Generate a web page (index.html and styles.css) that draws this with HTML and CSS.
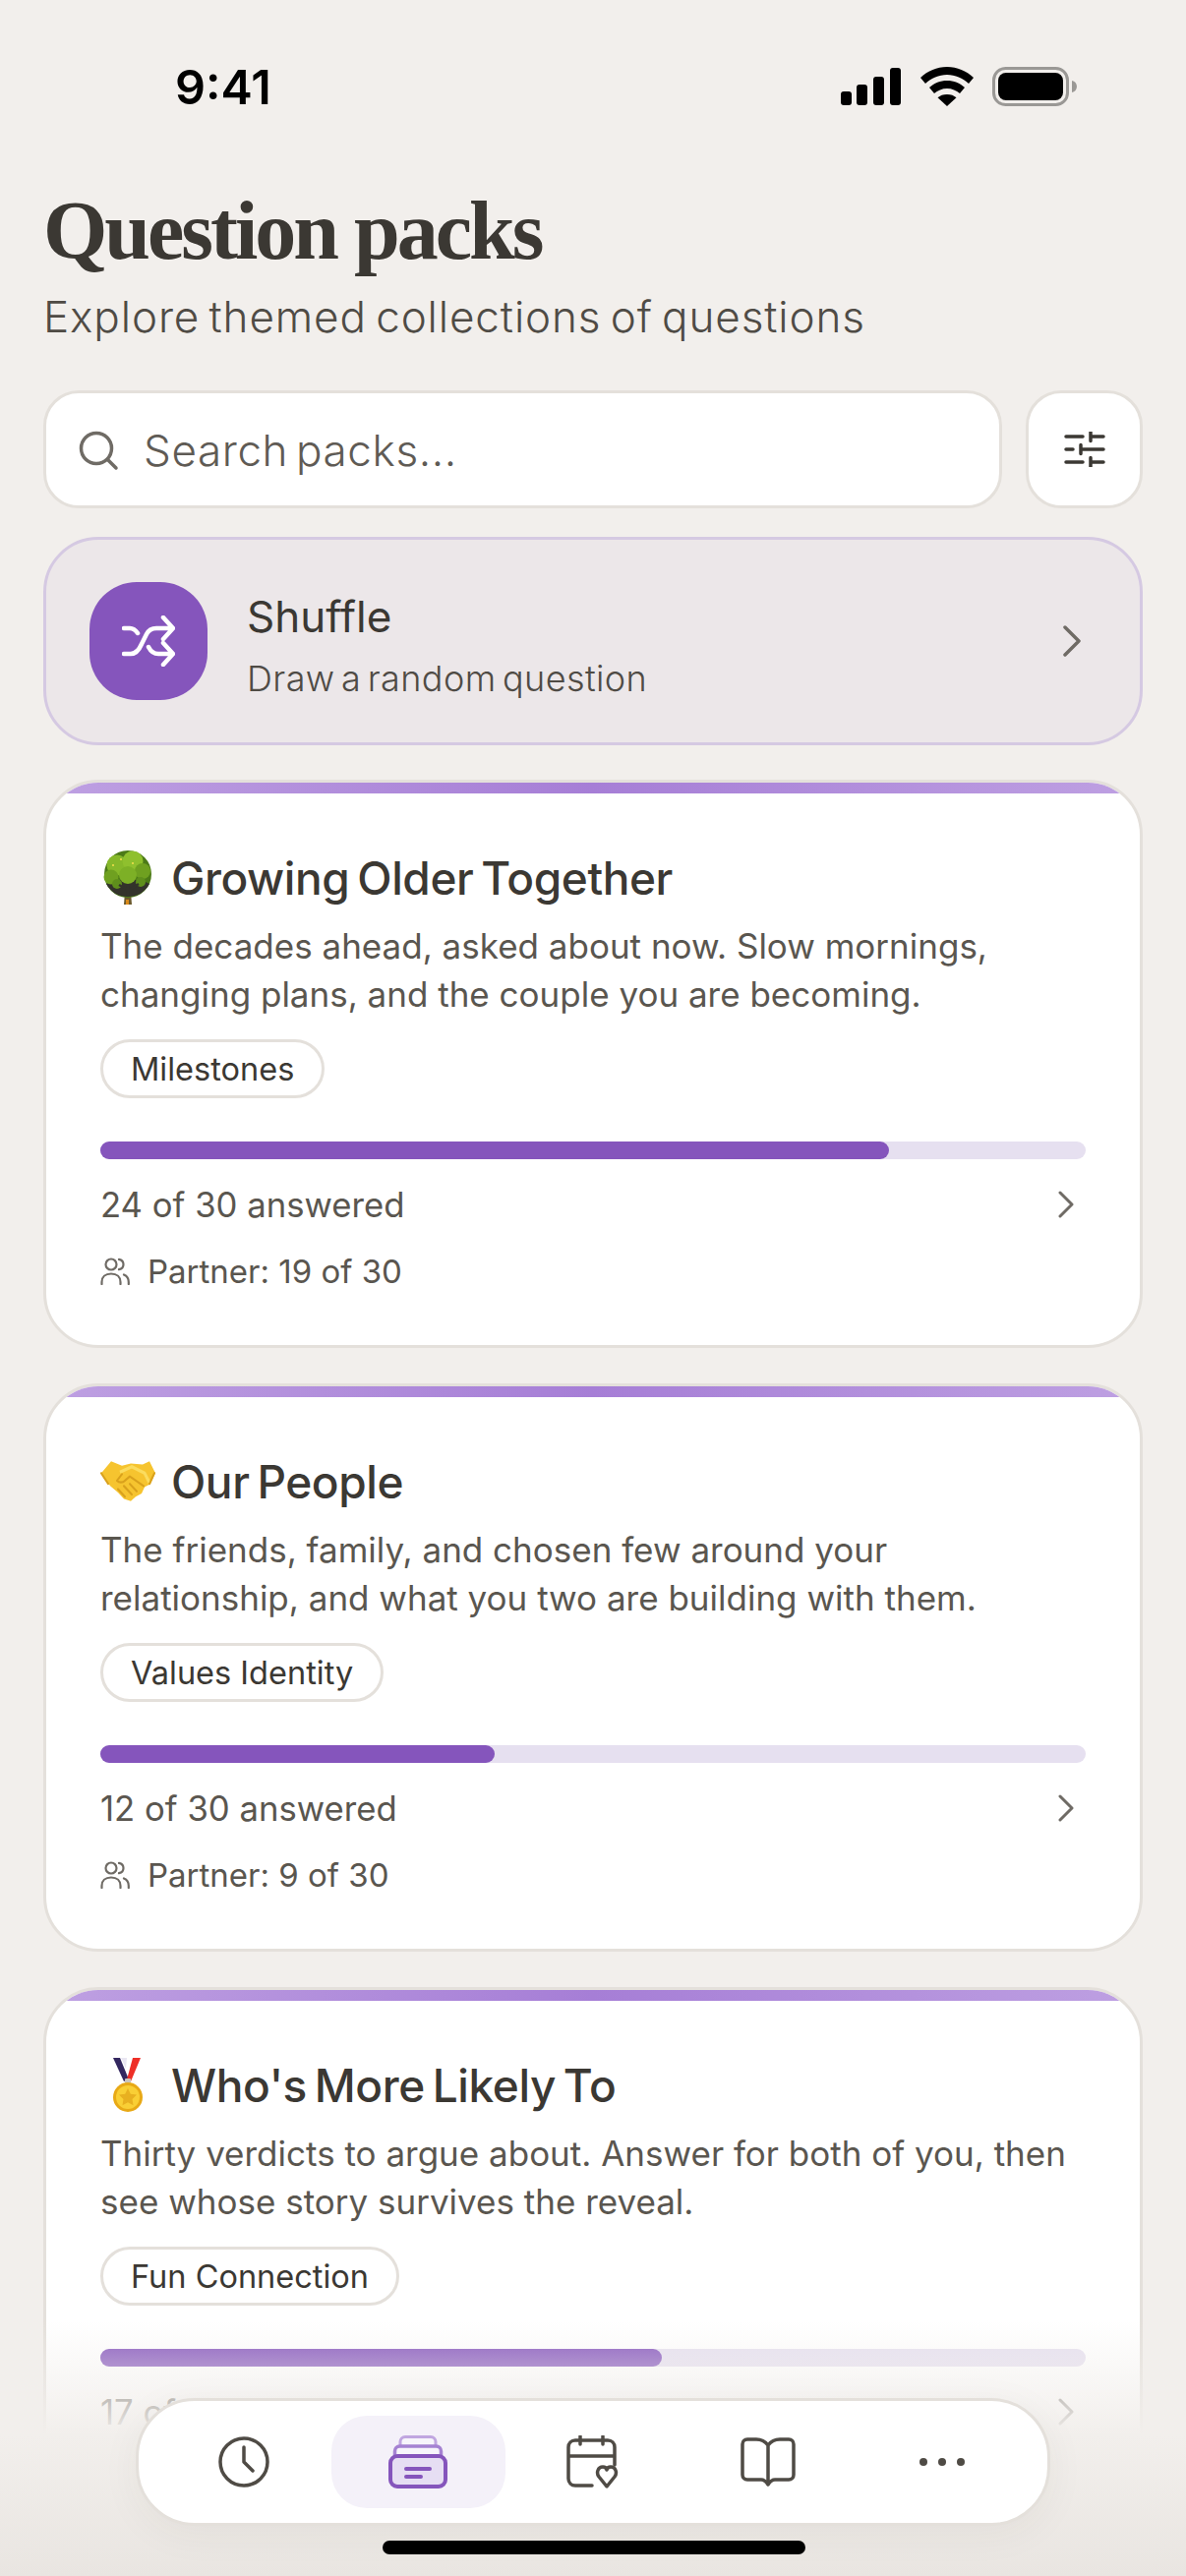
FILE: index.html
```html
<!DOCTYPE html>
<html>
<head>
    <title>Question packs</title>
    <link rel="stylesheet" href="styles.css">
</head>
<body>
<div class="phone">
    <div class="status-bar">
        <div class="time">9:41</div>
        <div class="status-icons">
            <svg width="62" height="38" viewBox="0 0 62 38"><rect x="0" y="24" width="11" height="14" rx="3"/><rect x="16" y="17" width="11" height="21" rx="3"/><rect x="33" y="9" width="11" height="29" rx="3"/><rect x="50" y="0" width="11" height="38" rx="3"/></svg>
            <svg width="54" height="40" viewBox="0 0 54 40"><path d="M27 0C16.500 0 7.500 4 0 11l5 6C11 11.500 18.500 8 27 8s16 3.500 22 9l5-6C46.500 4 37.500 0 27 0z"/><path d="M27 14c-7 0-13 2.500-18 7l5 6c3.500-3 8-5 13-5s9.500 2 13 5l5-6c-5-4.500-11-7-18-7z"/><path d="M27 28c-4 0-7 1.200-9.500 3.300L27 40l9.500-8.700C34 29.200 31 28 27 28z"/></svg>
            <svg width="86" height="40" viewBox="0 0 86 40"><rect x="1.500" y="1.500" width="75" height="37" rx="12" fill="none" stroke="#9a9895" stroke-width="3"/><rect x="6" y="6" width="66" height="28" rx="8"/><path d="M81 14c3 .6 5 3 5 6s-2 5.400-5 6z" fill="#9a9895"/></svg>
        </div>
    </div>

    <div class="page-head">
        <h1>Question packs</h1>
        <p>Explore themed collections of questions</p>
    </div>

    <div class="search-row">
        <div class="search-box">
            <svg width="44" height="44" viewBox="0 0 44 44" fill="none" stroke="#6f6b65" stroke-width="3.500" stroke-linecap="round"><circle cx="20" cy="20" r="15.500"/><path d="M31.500 31.500L40 40"/></svg>
            <span>Search packs...</span>
        </div>
        <div class="filter-btn">
            <svg width="42" height="36" viewBox="0 0 42 36" fill="none" stroke="#3b3833" stroke-width="3.500" stroke-linecap="round"><path d="M2 5h17M27 5h13M27 0.500v9M2 18h7M17 18h23M17 13.500v9M2 31h17M27 31h13M27 26.500v9"/></svg>
        </div>
    </div>

    <div class="shuffle-card">
        <div class="shuffle-icon">
            <svg width="54" height="52" viewBox="0 0 54 52" fill="none" stroke="#fff" stroke-width="4.500" stroke-linecap="round" stroke-linejoin="round"><path d="M2 13h6c4 0 6 2 8 5M2 39h7c5 0 8-3 11-10l5-10c2-4 5-6 10-6h15M42 2l10 11-10 11M27 32c2 4 5 7 10 7h14M42 28l10 11-10 11"/></svg>
        </div>
        <div class="shuffle-text">
            <div class="shuffle-title">Shuffle</div>
            <div class="shuffle-sub">Draw a random question</div>
        </div>
        <svg class="chevron" width="20" height="32" viewBox="0 0 20 32" fill="none" stroke="#6f6b65" stroke-width="3.500" stroke-linecap="round" stroke-linejoin="round"><path d="M3 2l14 14L3 30"/></svg>
    </div>

    <div class="pack-card">
        <div class="pack-strip"></div>
        <div class="pack-title">
            <svg class="emoji" width="56" height="56" viewBox="0 0 56 56"><path d="M25 42h6l1 13h-8z" fill="#6b5a2e"/><path d="M26 50h3v5h-3z" fill="#d98a1a"/><circle cx="28" cy="24" r="24" fill="#4c7a18"/><path d="M6 34c5 9 13 13 22 13s17-4 22-13l-8-4H14z" fill="#33332b"/><circle cx="17" cy="15" r="10.500" fill="#86b82a"/><circle cx="33" cy="11" r="10.500" fill="#8fc02e"/><circle cx="43" cy="21" r="8" fill="#6fa020"/><circle cx="11" cy="27" r="7.500" fill="#6fa020"/><circle cx="28" cy="25" r="9" fill="#7db026"/><circle cx="41" cy="32" r="5" fill="#5f8f1c"/><circle cx="17" cy="34" r="5" fill="#5f8f1c"/><path d="M28 47V36M28 40l-9-5M28 41l11-7" stroke="#33332b" stroke-width="2.500" fill="none"/><circle cx="21" cy="9" r="1" fill="#f4e04d"/><circle cx="33" cy="13" r="1" fill="#f4e04d"/><circle cx="13" cy="15" r="1" fill="#f4e04d"/></svg>
            <span>Growing Older Together</span>
        </div>
        <p class="pack-desc">The decades ahead, asked about now. Slow mornings, changing plans, and the couple you are becoming.</p>
        <span class="pill">Milestones</span>
        <div class="progress"><div class="progress-fill" style="width: 80%"></div></div>
        <div class="pack-count">
            <span>24 of 30 answered</span>
            <svg width="18" height="28" viewBox="0 0 18 28" fill="none" stroke="#6f6b65" stroke-width="3" stroke-linecap="round" stroke-linejoin="round"><path d="M3 2l12 12L3 26"/></svg>
        </div>
        <div class="pack-partner">
            <svg width="30" height="28" viewBox="0 0 30 28" fill="none" stroke="#6f6b65" stroke-width="2.200" stroke-linecap="round"><circle cx="11" cy="7" r="5.500"/><path d="M1.500 27v-2c0-5 3.500-8.500 9.500-8.500s9.500 3.500 9.500 8.500v2M19 1.800c3 .6 4.500 2.700 4.500 5.200s-1.500 4.600-4.500 5.200M24 17.500c3 1.200 4.800 4 4.800 7.500v2"/></svg>
            <span>Partner: 19 of 30</span>
        </div>
    </div>

    <div class="pack-card">
        <div class="pack-strip"></div>
        <div class="pack-title">
            <svg class="emoji" width="56" height="48" viewBox="0 0 56 44" preserveAspectRatio="none"><path d="M1 14L11 3l11 4 9-2 12 1 7-3 6 11-5 10-6 3-3 6-6 3-5 4-7-2-6-6-8-6z" fill="#f6c42f"/><path d="M20 13l12-5 13 6 5 9" fill="none" stroke="#fbdc5e" stroke-width="3" stroke-linejoin="round"/><path d="M22 15l-5 6c2 2 6 2 8 0l5-4 14 9M1 14l7 10M55 14l-5 10" fill="none" stroke="#d9a11c" stroke-width="2" stroke-linejoin="round" stroke-linecap="round"/><path d="M18 29l7 7M24 26l8 8M30 24l7 7" stroke="#d9a11c" stroke-width="2" stroke-linecap="round"/></svg>
            <span>Our People</span>
        </div>
        <p class="pack-desc">The friends, family, and chosen few around your relationship, and what you two are building with them.</p>
        <span class="pill">Values Identity</span>
        <div class="progress"><div class="progress-fill" style="width: 40%"></div></div>
        <div class="pack-count">
            <span>12 of 30 answered</span>
            <svg width="18" height="28" viewBox="0 0 18 28" fill="none" stroke="#6f6b65" stroke-width="3" stroke-linecap="round" stroke-linejoin="round"><path d="M3 2l12 12L3 26"/></svg>
        </div>
        <div class="pack-partner">
            <svg width="30" height="28" viewBox="0 0 30 28" fill="none" stroke="#6f6b65" stroke-width="2.200" stroke-linecap="round"><circle cx="11" cy="7" r="5.500"/><path d="M1.500 27v-2c0-5 3.500-8.500 9.500-8.500s9.500 3.500 9.500 8.500v2M19 1.800c3 .6 4.500 2.700 4.500 5.200s-1.500 4.600-4.500 5.200M24 17.500c3 1.200 4.800 4 4.800 7.500v2"/></svg>
            <span>Partner: 9 of 30</span>
        </div>
    </div>

    <div class="pack-card">
        <div class="pack-strip"></div>
        <div class="pack-title">
            <svg class="emoji" width="56" height="56" viewBox="0 0 56 56"><path d="M13 0h7l9 22-5 2z" fill="#33275f"/><path d="M21 0h6l-1 11z" fill="#e9e6f2"/><path d="M33 0h8L31 24l-4-2z" fill="#ee2f27"/><rect x="25" y="21" width="6" height="5" rx="1" fill="#c9c4bb"/><circle cx="28" cy="40" r="15" fill="#e8a916"/><circle cx="28" cy="40" r="12" fill="#f9cf35"/><path d="M28 31l2.800 5.700 6.200.9-4.500 4.400 1 6.200-5.500-2.900-5.500 2.900 1-6.200-4.500-4.400 6.200-.9z" fill="#e8b020"/></svg>
            <span>Who's More Likely To</span>
        </div>
        <p class="pack-desc">Thirty verdicts to argue about. Answer for both of you, then see whose story survives the reveal.</p>
        <span class="pill">Fun Connection</span>
        <div class="progress"><div class="progress-fill" style="width: 57%"></div></div>
        <div class="pack-count">
            <span>17 of 30 answered</span>
            <svg width="18" height="28" viewBox="0 0 18 28" fill="none" stroke="#6f6b65" stroke-width="3" stroke-linecap="round" stroke-linejoin="round"><path d="M3 2l12 12L3 26"/></svg>
        </div>
    </div>

    <div class="bottom-fade"></div>

    <nav class="tab-bar">
        <div class="tab">
            <svg width="52" height="52" viewBox="0 0 52 52" fill="none" stroke="#4f4b45" stroke-width="3.500" stroke-linecap="round" stroke-linejoin="round"><circle cx="26" cy="26" r="24"/><path d="M26 11v15l9 9"/></svg>
        </div>
        <div class="tab tab-active">
            <svg width="60" height="54" viewBox="0 0 60 54"><rect x="12" y="1.500" width="36" height="22" rx="5" fill="#f7f5fb" stroke="#c0a6e0" stroke-width="3"/><rect x="6.500" y="11" width="47" height="22" rx="5" fill="#f7f5fb" stroke="#a582d2" stroke-width="3.500"/><rect x="2" y="21" width="56" height="31" rx="7" fill="#e6def3" stroke="#8555bc" stroke-width="4"/><path d="M18 34h24M18 42h15" stroke="#8555bc" stroke-width="4" stroke-linecap="round"/></svg>
        </div>
        <div class="tab">
            <svg width="54" height="54" viewBox="0 0 54 54" fill="none" stroke="#4f4b45" stroke-width="3.500" stroke-linecap="round" stroke-linejoin="round"><path d="M26 51H9c-4 0-7-3-7-7V12c0-4 3-7 7-7h33c4 0 7 3 7 7v18M2 21h47M14 1v8M37 1v8"/><path d="M41 52l-8-10c-3-4-1-10 4-10 2 0 3.500 1 4 3 .5-2 2-3 4-3 5 0 7 6 4 10z"/></svg>
        </div>
        <div class="tab">
            <svg width="56" height="50" viewBox="0 0 56 50" fill="none" stroke="#4f4b45" stroke-width="3.500" stroke-linecap="round" stroke-linejoin="round"><path d="M28 8c-3-4-7-6-12-6H7C4 2 2 4 2 7v31c0 3 2 5 5 5h14c3 0 5 2 7 5 2-3 4-5 7-5h14c3 0 5-2 5-5V7c0-3-2-5-5-5h-9c-5 0-9 2-12 6zM28 8v40"/></svg>
        </div>
        <div class="tab">
            <svg width="48" height="10" viewBox="0 0 48 10" fill="#4f4b45"><circle cx="5" cy="5" r="4"/><circle cx="24" cy="5" r="4"/><circle cx="43" cy="5" r="4"/></svg>
        </div>
    </nav>
    <div class="home-indicator"></div>
</div>
</body>
</html>
```

FILE: styles.css
```css
* {
    box-sizing: border-box;
}
body {
    margin: 0;
    background: #f2efec;
    font-family: Inter, 'Noto Sans', sans-serif;
    color: #3b3833;
}
.phone {
    position: relative;
    width: 1206px;
    height: 2620px;
    overflow: hidden;
    padding: 0 44px;
}
.status-bar {
    display: flex;
    align-items: center;
    justify-content: space-between;
    height: 176px;
    padding: 0 0 0 134px;
}
.time {
    font-size: 48.500px;
    font-weight: 600;
    color: #000;
}
.status-icons {
    display: flex;
    align-items: center;
    gap: 19px;
    padding-right: 67px;
}
.page-head {
    height: 221px;
    padding-top: 9px;
}
.page-head h1 {
    margin: 0;
    font-family: 'Liberation Serif', serif;
    font-size: 84px;
    font-weight: 700;
    line-height: 100px;
    letter-spacing: -3px;
    color: #3b3833;
}
.page-head p {
    margin: 7px 0 0;
    font-size: 44px;
    font-weight: 300;
    line-height: 60px;
    letter-spacing: 0.900px;
    word-spacing: -4px;
    color: #4f4b45;
}
.search-row {
    display: flex;
    gap: 24px;
    height: 120px;
    margin-bottom: 29px;
}
.search-box {
    flex: 1;
    display: flex;
    align-items: center;
    gap: 24px;
    padding: 2px 31px 0;
    background: #fff;
    border: 3px solid #e4e0db;
    border-radius: 36px;
    font-size: 44px;
    font-weight: 300;
    letter-spacing: 0.600px;
    word-spacing: -5px;
    color: #5f5b55;
}
.filter-btn {
    display: flex;
    align-items: center;
    justify-content: center;
    width: 119px;
    background: #fff;
    border: 3px solid #e4e0db;
    border-radius: 36px;
}
.shuffle-card {
    display: flex;
    align-items: center;
    height: 212px;
    padding: 0 59px 0 44px;
    margin-bottom: 35px;
    background: #ece7e9;
    border: 3px solid #d5c9e2;
    border-radius: 56px;
}
.shuffle-icon {
    display: flex;
    align-items: center;
    justify-content: center;
    width: 120px;
    height: 120px;
    margin-right: 40px;
    background: #8555bc;
    border-radius: 48px;
}
.shuffle-text {
    flex: 1;
    margin-top: 8px;
}
.shuffle-title {
    font-size: 44px;
    font-weight: 400;
    line-height: 56px;
    margin-bottom: 11px;
}
.shuffle-sub {
    font-size: 36px;
    font-weight: 300;
    line-height: 48px;
    letter-spacing: 0.400px;
    word-spacing: -4px;
    color: #4f4b45;
}
.pack-card {
    position: relative;
    height: 578px;
    margin-bottom: 36px;
    padding: 67px 55px 0;
    background: #fff;
    border: 3px solid #e4e0db;
    border-radius: 56px;
    overflow: hidden;
}
.pack-strip {
    position: absolute;
    top: 0;
    left: 0;
    right: 0;
    height: 11px;
    background: linear-gradient(90deg, #bea0e2, #a67ed6 50%, #bea0e2);
}
.pack-title {
    display: flex;
    align-items: center;
    gap: 16px;
    height: 60px;
    font-size: 46px;
    font-weight: 500;
    letter-spacing: -0.400px;
    word-spacing: -4px;
    color: #3b3833;
}
.emoji {
    flex: none;
}
.pack-desc {
    margin: 15px 0 21px;
    font-size: 35px;
    line-height: 49px;
    color: #5a564f;
}
.pill {
    display: inline-block;
    height: 60px;
    padding: 0 28px;
    border: 3px solid #e4e0db;
    border-radius: 30px;
    font-size: 32.500px;
    line-height: 56px;
    color: #3b3833;
}
.progress {
    height: 18px;
    margin-top: 44px;
    background: #e6e0f0;
    border-radius: 9px;
}
.progress-fill {
    height: 100%;
    background: #8555bc;
    border-radius: 9px;
}
.pack-count {
    display: flex;
    align-items: center;
    justify-content: space-between;
    height: 48px;
    margin-top: 22px;
    padding-right: 11px;
    font-size: 34.700px;
    color: #5a564f;
}
.pack-partner {
    display: flex;
    align-items: center;
    gap: 18px;
    height: 44px;
    margin-top: 22px;
    font-size: 33px;
    color: #5a564f;
}
.bottom-fade {
    position: absolute;
    left: 0;
    right: 0;
    top: 2360px;
    bottom: 0;
    background: linear-gradient(180deg, rgba(242, 239, 236, 0), #f2efec 45%, #e9e5e1);
}
.tab-bar {
    position: absolute;
    left: 138px;
    top: 2439px;
    display: flex;
    align-items: center;
    justify-content: space-between;
    width: 930px;
    height: 130px;
    padding: 0 18px;
    background: #fff;
    border: 3px solid #e4e0db;
    border-radius: 60px;
    box-shadow: 0 8px 40px rgba(60, 50, 40, 0.05);
}
.tab {
    display: flex;
    align-items: center;
    justify-content: center;
    width: 178px;
    height: 94px;
    border-radius: 36px;
}
.tab-active {
    background: #f4f1f9;
}
.home-indicator {
    position: absolute;
    left: 389px;
    top: 2584px;
    width: 430px;
    height: 14px;
    background: #000;
    border-radius: 7px;
}
```
